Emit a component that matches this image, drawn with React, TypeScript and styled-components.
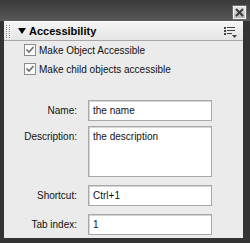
import styled, { createGlobalStyle } from "styled-components";

const GlobalStyle = createGlobalStyle`
  html, body {
    margin: 0;
    padding: 0;
    background: #2e2e2e;
  }
  * {
    box-sizing: border-box;
  }
`;

const fields = [
  { label: "Name:", value: "the name", height: 21, top: 0 },
  { label: "Description:", value: "the description", height: 51, top: 5 },
  { label: "Shortcut:", value: "Ctrl+1", height: 21, top: 8 },
  { label: "Tab index:", value: "1", height: 21, top: 8 }
];

const checks = ["Make Object Accessible", "Make child objects accessible"];

const Grip = () => (
  <GripBox>
    <svg width="5" height="15" viewBox="0 0 5 15">
      {Array.from({ length: 7 }).map((_, i) => (
        <g key={i}>
          <rect x="0" y={i * 2 + 1} width="1" height="1" fill="#8a8a8a" />
          <rect x="1" y={i * 2 + 2} width="1" height="1" fill="#ffffff" />
          <rect x="3" y={i * 2 + 1} width="1" height="1" fill="#8a8a8a" />
          <rect x="4" y={i * 2 + 2} width="1" height="1" fill="#ffffff" />
        </g>
      ))}
    </svg>
  </GripBox>
);

const MenuIcon = () => (
  <svg width="13" height="11" viewBox="0 0 13 11">
    <rect x="0" y="0" width="2" height="2" fill="#444" />
    <rect x="3" y="0" width="8" height="1" fill="#444" />
    <rect x="0" y="3" width="2" height="2" fill="#444" />
    <rect x="3" y="3" width="8" height="1" fill="#444" />
    <rect x="0" y="6" width="2" height="2" fill="#444" />
    <rect x="3" y="6" width="5" height="1" fill="#444" />
    <polygon points="8,8 13,8 10.5,11" fill="#444" />
  </svg>
);

const CheckMark = () => (
  <svg width="10" height="10" viewBox="0 0 10 10">
    <path d="M1.5 4.5 L4 7 L8.5 2" stroke="#6e6e6e" strokeWidth="1.6" fill="none" />
  </svg>
);

const App = () => {
  return (
    <>
      <GlobalStyle />
      <Window>
        <TitleBar>
          <CloseButton>
            <svg width="9" height="9" viewBox="0 0 9 9">
              <path d="M1 1 L8 8 M8 1 L1 8" stroke="#3a3a3a" strokeWidth="2" />
            </svg>
          </CloseButton>
        </TitleBar>
        <Frame>
          <Panel>
            <PanelHeader>
              <Grip />
              <Triangle />
              <PanelTitle>Accessibility</PanelTitle>
              <MenuButton>
                <MenuIcon />
              </MenuButton>
            </PanelHeader>
            <Checks>
              {checks.map((text) => (
                <CheckRow key={text}>
                  <CheckBox>
                    <CheckMark />
                  </CheckBox>
                  <span>{text}</span>
                </CheckRow>
              ))}
            </Checks>
            <Fields>
              {fields.map((f) => (
                <FieldRow key={f.label} $top={f.top}>
                  <Label>{f.label}</Label>
                  <Input $height={f.height}>{f.value}</Input>
                </FieldRow>
              ))}
            </Fields>
          </Panel>
        </Frame>
      </Window>
    </>
  );
};

export default App;

const Window = styled.div`
  width: 250px;
  height: 243px;
  display: flex;
  flex-direction: column;
  background: #2e2e2e;
  font-family: "Liberation Sans", Arial, sans-serif;
  font-size: 10px;
  color: #111;
`;

const TitleBar = styled.div`
  height: 21px;
  display: flex;
  justify-content: flex-end;
  align-items: flex-start;
  padding: 6px 4px 0 0;
  background: linear-gradient(#3a3a3a, #4a4a4a 60%, #5a5a5a);
`;

const CloseButton = styled.div`
  width: 13px;
  height: 13px;
  display: flex;
  align-items: center;
  justify-content: center;
  background: linear-gradient(#e4e4e4, #b8b8b8);
  border: 1px solid #f2f2f2;
  outline: 1px solid #6a6a6a;
`;

const Frame = styled.div`
  flex: 1;
  display: flex;
  padding: 0 7px 5px 4px;
  background: #333;
  border-top: 0;
`;

const Panel = styled.div`
  flex: 1;
  display: flex;
  flex-direction: column;
  background: #ebebeb;
`;

const PanelHeader = styled.div`
  height: 20px;
  display: flex;
  align-items: center;
  padding: 0 6px 0 2px;
  background: linear-gradient(#f4f4f4, #e6e6e6);
  border-top: 1px solid #ffffff;
  border-bottom: 1px solid #a8a8a8;
`;

const GripBox = styled.div`
  display: flex;
  align-items: center;
  width: 12px;
`;

const Triangle = styled.div`
  width: 0;
  height: 0;
  border-left: 4px solid transparent;
  border-right: 4px solid transparent;
  border-top: 6px solid #000;
  margin-right: 3px;
`;

const PanelTitle = styled.span`
  flex: 1;
  font-weight: 700;
  font-size: 11px;
  color: #000;
`;

const MenuButton = styled.div`
  display: flex;
  align-items: center;
  padding-top: 2px;
`;

const Checks = styled.div`
  display: flex;
  flex-direction: column;
  gap: 7px;
  padding: 3px 0 0 20px;
`;

const CheckRow = styled.label`
  display: flex;
  align-items: center;
  gap: 3px;
  height: 12px;
`;

const CheckBox = styled.div`
  width: 12px;
  height: 12px;
  display: flex;
  align-items: center;
  justify-content: center;
  background: #fafafa;
  border: 1px solid #8c8c8c;
`;

const Fields = styled.div`
  display: flex;
  flex-direction: column;
  padding-top: 25px;
`;

const FieldRow = styled.div<{ $top: number }>`
  display: grid;
  grid-template-columns: 73px 124px;
  column-gap: 11px;
  margin-top: ${(p) => p.$top}px;
`;

const Label = styled.div`
  text-align: right;
  padding-top: 5px;
`;

const Input = styled.div<{ $height: number }>`
  height: ${(p) => p.$height}px;
  padding: 4px 4px;
  background: #ffffff;
  border: 1px solid #a9a9a9;
  box-shadow: inset 1px 1px 0 #d4d4d4;
`;
